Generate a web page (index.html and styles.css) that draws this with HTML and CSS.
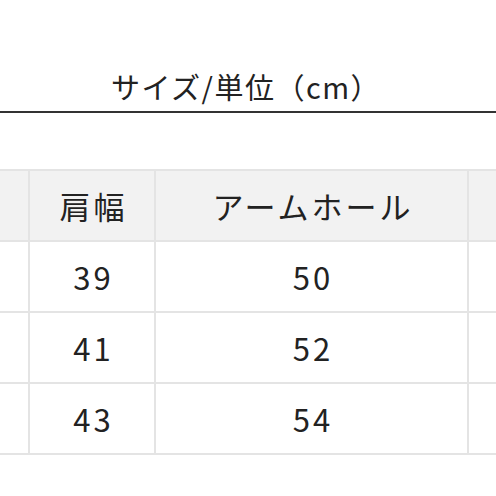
FILE: index.html
```html
<!DOCTYPE html>
<html lang="ja">
<head>
<meta charset="utf-8">
<link rel="stylesheet" href="styles.css">
</head>
<body>
<div class="page">
  <div class="title">サイズ/単位（cm）</div>
  <div class="grid">
    <div class="cell head">サイズ</div>
    <div class="cell head">肩幅</div>
    <div class="cell head">アームホール</div>
    <div class="cell head">着丈</div>

    <div class="cell">S</div>
    <div class="cell">39</div>
    <div class="cell">50</div>
    <div class="cell">65</div>

    <div class="cell">M</div>
    <div class="cell">41</div>
    <div class="cell">52</div>
    <div class="cell">67</div>

    <div class="cell">L</div>
    <div class="cell">43</div>
    <div class="cell">54</div>
    <div class="cell">69</div>
  </div>
</div>
</body>
</html>
```

FILE: styles.css
```css
html, body {
  margin: 0;
  padding: 0;
  background: #ffffff;
}
body {
  width: 496px;
  height: 496px;
  overflow: hidden;
  font-family: "Noto Sans CJK JP", "Noto Sans", sans-serif;
  color: #222222;
}
.page {
  display: flex;
  flex-direction: column;
}
.title {
  padding-top: 66px;
  padding-bottom: 5px;
  line-height: 40px;
  font-size: 29px;
  letter-spacing: 1.5px;
  text-align: center;
  padding-right: 4px;
  border-bottom: 2px solid #333333;
  margin-bottom: 56px;
}
.grid {
  display: grid;
  grid-template-columns: 200px 124px 311px 200px;
  grid-auto-rows: 69px;
  gap: 2px;
  padding: 2px;
  background: #e4e4e4;
  margin-left: -174px;
  width: max-content;
}
.cell {
  background: #ffffff;
  display: flex;
  align-items: center;
  justify-content: center;
  font-size: 31px;
  letter-spacing: 3px;
  padding-left: 3px;
}
.head {
  background: #f2f2f2;
}
```
